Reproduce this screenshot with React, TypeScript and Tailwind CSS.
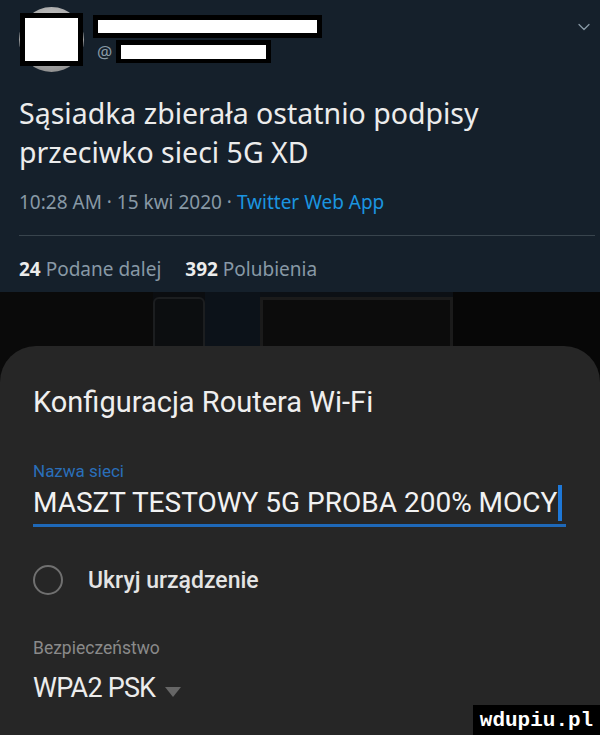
import { ChevronDown } from "lucide-react";

function CensorBox({ className }: { className: string }) {
  return (
    <div className={`bg-black p-[5px] ${className}`}>
      <div className="w-full h-full bg-white" />
    </div>
  );
}

function TweetHeader() {
  return (
    <div className="flex justify-between pr-[6px]">
      <div className="flex">
        <div className="relative w-[65px] h-[65px] shrink-0">
          <div className="w-[65px] h-[65px] rounded-full bg-[radial-gradient(circle_at_50%_40%,#e0e0e0,#9a9a9a_70%,#6d6d6d)]" />
          <CensorBox className="absolute left-[1px] top-[6px] w-[63px] h-[53px]" />
        </div>
        <div className="ml-[9px] pt-[8px] flex flex-col">
          <CensorBox className="w-[229px] h-[23px]" />
          <div className="flex items-center mt-[2px]">
            <span className="w-[23px] pl-[4px] text-[17px] leading-none text-[#8899a6]">@</span>
            <CensorBox className="w-[155px] h-[23px] py-[5px] pb-[4px]" />
          </div>
        </div>
      </div>
      <ChevronDown className="mt-[10px] w-[20px] h-[20px] text-[#8899a6]" strokeWidth={1.5} />
    </div>
  );
}

function TweetSection() {
  return (
    <section className="h-[292px] shrink-0 bg-[#15202b] pl-[19px] pt-[7px] font-['Noto_Sans',sans-serif]">
      <TweetHeader />
      <p className="mt-[22px] w-[540px] text-[28.5px] leading-[39px] text-[#ececec]">
        Sąsiadka zbierała ostatnio podpisy przeciwko sieci 5G XD
      </p>
      <p className="mt-[21px] text-[19px] leading-none text-[#8899a6]">
        10:28 AM · 15 kwi 2020 · <span className="text-[#1b95e0]">Twitter Web App</span>
      </p>
      <div className="mt-[23px] h-px mr-[5px] bg-[#38444d]" />
      <div className="mt-[24px] flex gap-[24px] text-[19px] leading-none text-[#8899a6]">
        <span>
          <b className="text-[#ececec]">24</b> Podane dalej
        </span>
        <span>
          <b className="text-[#ececec]">392</b> Polubienia
        </span>
      </div>
    </section>
  );
}

function BackdropStrip() {
  return (
    <div className="h-[54px] shrink-0 flex">
      <div className="w-[153px] bg-[#0a0a0a]" />
      <div className="w-[52px] pt-[5px] bg-[#0b0d10]">
        <div className="h-full rounded-t-[6px] border-2 border-b-0 border-[#1c1e20] bg-[#0c0e10]" />
      </div>
      <div className="w-[55px] bg-[#0c1219]" />
      <div className="w-[193px] pt-[5px] bg-[#0c1015]">
        <div className="h-full border-[3px] border-b-0 border-[#1b1b1b] bg-[#0c0c0c]" />
      </div>
      <div className="flex-1 bg-[#070707]" />
    </div>
  );
}

function RouterPanel() {
  return (
    <div className="relative flex-1 rounded-t-[36px] bg-[#262626] pl-[33px] pt-[42px] font-['Roboto',sans-serif]">
      <h1 className="text-[29px] leading-none text-[#efefef]">Konfiguracja Routera Wi-Fi</h1>

      <div className="mt-[46px] text-[17px] leading-none text-[#2a6fba]">Nazwa sieci</div>
      <div className="mt-[5px] w-[533px] border-b-[3px] border-[#1e68b8] pb-[3px] flex items-center">
        <span className="text-[28px] leading-none text-[#f2f2f2]">MASZT TESTOWY 5G PROBA 200% MOCY</span>
        <span className="ml-[1px] w-[4px] h-[36px] bg-[#1e78d8]" />
      </div>

      <div className="mt-[38px] flex items-center">
        <div className="w-[30px] h-[30px] rounded-full border-2 border-[#707070]" />
        <span className="ml-[25px] text-[23px] leading-none font-medium text-[#e4e4e4]">
          Ukryj urządzenie
        </span>
      </div>

      <div className="mt-[45px] text-[17.5px] leading-none text-[#8a8a8a]">Bezpieczeństwo</div>
      <div className="mt-[17px] flex items-center">
        <span className="text-[27px] leading-none tracking-[-0.8px] text-[#ececec]">WPA2 PSK</span>
        <span className="ml-[10px] mt-[8px] w-0 h-0 border-x-[8px] border-x-transparent border-t-[10px] border-t-[#666666]" />
      </div>

      <div className="absolute right-0 bottom-0 w-[127px] h-[30px] bg-black flex items-center justify-center">
        <span className="font-['Liberation_Mono',monospace] font-bold text-[21px] leading-none text-white">
          wdupiu.pl
        </span>
      </div>
    </div>
  );
}

export default function App() {
  return (
    <div className="w-[600px] h-[735px] flex flex-col overflow-hidden bg-[#15202b]">
      <TweetSection />
      <div className="flex-1 flex flex-col bg-[linear-gradient(to_right,#0a0a0a_75%,#070707_75%)]">
        <BackdropStrip />
        <RouterPanel />
      </div>
    </div>
  );
}
